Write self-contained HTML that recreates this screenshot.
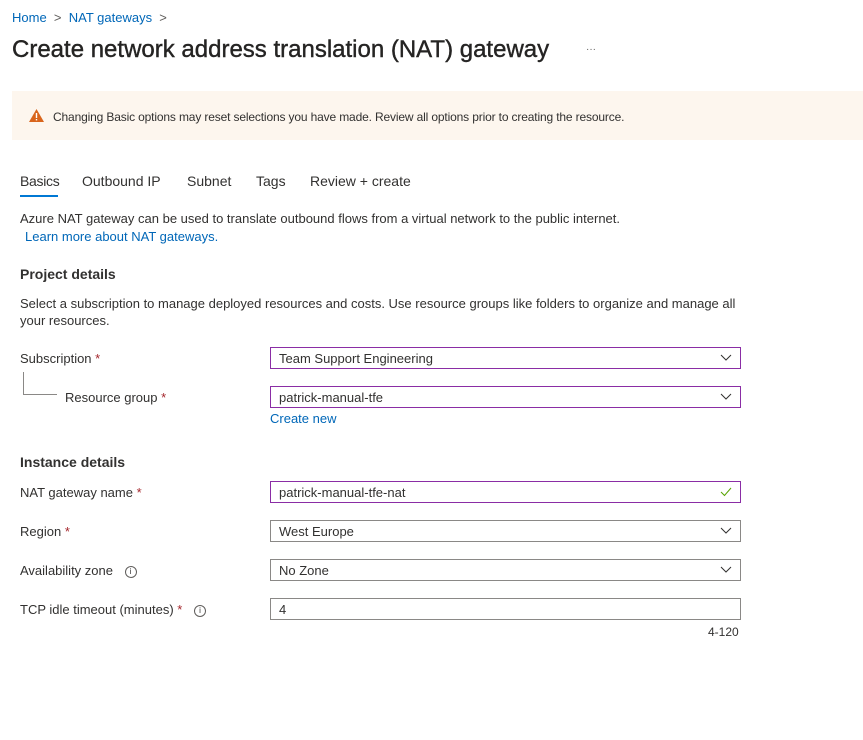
<!DOCTYPE html>
<html><head><style>
body{margin:0;width:863px;height:740px;background:#fff;font-family:"Liberation Sans",sans-serif;color:#323130;font-size:13px;position:relative;overflow:hidden}
.a{position:absolute;white-space:nowrap}
.blue{color:#0067b8}
.in{position:absolute;left:270px;width:469px;height:20px;border:1px solid #8a8886;background:#fff}
.in.p{border-color:#8a2da5}
.in span{position:absolute;left:8px;top:3px}
.chev{position:absolute;right:8px;top:6px}
.req{color:#a4262c}
.info{display:inline-block;width:10px;height:10px;border:1px solid #605e5c;border-radius:50%;font-size:8px;text-align:center;line-height:10px;vertical-align:middle;margin-left:8px}
</style></head><body>
<div class="a blue" style="left:12px;top:10px">Home <span style="color:#605e5c">&nbsp;&gt;&nbsp;</span> NAT gateways <span style="color:#605e5c">&nbsp;&gt;</span></div>
<div class="a" style="left:12px;top:36px;font-size:24px;color:#252423;-webkit-text-stroke:0.4px #252423">Create network address translation (NAT) gateway</div>
<div class="a" style="left:586px;top:44px;color:#605e5c;font-size:10px">···</div>
<div class="a" style="left:12px;top:91px;width:851px;height:49px;background:#fdf6ee"></div>
<svg class="a" style="left:29px;top:109px" width="15" height="13" viewBox="0 0 15 13"><path d="M7.5 0L15 13H0z" fill="#d9651c"/><rect x="6.8" y="4" width="1.4" height="5" fill="#fff"/><rect x="6.8" y="10" width="1.4" height="1.4" fill="#fff"/></svg>
<div class="a" style="left:53px;top:110px;font-size:12px;letter-spacing:-0.15px">Changing Basic options may reset selections you have made. Review all options prior to creating the resource.</div>
<div class="a" style="left:20px;top:173px;font-size:14px;letter-spacing:-0.3px">Basics</div>
<div class="a" style="left:20px;top:195px;width:38px;height:2px;background:#0078d4"></div>
<div class="a" style="left:82px;top:173px;font-size:14px">Outbound IP</div>
<div class="a" style="left:187px;top:173px;font-size:14px">Subnet</div>
<div class="a" style="left:256px;top:173px;font-size:14px">Tags</div>
<div class="a" style="left:310px;top:173px;font-size:14px">Review + create</div>
<div class="a" style="left:20px;top:211px">Azure NAT gateway can be used to translate outbound flows from a virtual network to the public internet.</div>
<div class="a blue" style="left:25px;top:229px">Learn more about NAT gateways.</div>
<div class="a" style="left:20px;top:266px;font-size:14px;font-weight:bold;color:#323130">Project details</div>
<div class="a" style="left:20px;top:295px;line-height:17px">Select a subscription to manage deployed resources and costs. Use resource groups like folders to organize and manage all<br>your resources.</div>
<div class="a" style="left:20px;top:351px">Subscription <span class="req">*</span></div>
<div class="a" style="left:23px;top:372px;width:33px;height:22px;border-left:1px solid #8a8886;border-bottom:1px solid #8a8886"></div>
<div class="a" style="left:65px;top:390px">Resource group <span class="req">*</span></div>
<div class="a blue" style="left:270px;top:411px">Create new</div>
<div class="a" style="left:20px;top:454px;font-size:14px;font-weight:bold">Instance details</div>
<div class="a" style="left:20px;top:485px">NAT gateway name <span class="req">*</span></div>
<div class="a" style="left:20px;top:524px">Region <span class="req">*</span></div>
<div class="a" style="left:20px;top:563px">Availability zone <span class="info">i</span></div>
<div class="a" style="left:20px;top:602px">TCP idle timeout (minutes) <span class="req">*</span> <span class="info">i</span></div>
<div class="in p" style="top:347px"><span>Team Support Engineering</span><svg class="chev" width="12" height="8"><path d="M1 1l5 5 5-5" stroke="#323130" fill="none"/></svg></div>
<div class="in p" style="top:386px"><span>patrick-manual-tfe</span><svg class="chev" width="12" height="8"><path d="M1 1l5 5 5-5" stroke="#323130" fill="none"/></svg></div>
<div class="in p" style="top:481px"><span>patrick-manual-tfe-nat</span><svg class="chev" style="top:5px" width="12" height="10"><path d="M1 5l3.5 3.5L11 1" stroke="#57a300" fill="none"/></svg></div>
<div class="in" style="top:520px"><span>West Europe</span><svg class="chev" width="12" height="8"><path d="M1 1l5 5 5-5" stroke="#323130" fill="none"/></svg></div>
<div class="in" style="top:559px"><span>No Zone</span><svg class="chev" width="12" height="8"><path d="M1 1l5 5 5-5" stroke="#323130" fill="none"/></svg></div>
<div class="in" style="top:598px"><span>4</span></div>
<div class="a" style="left:708px;top:625px;font-size:12px">4-120</div>
</body></html>
